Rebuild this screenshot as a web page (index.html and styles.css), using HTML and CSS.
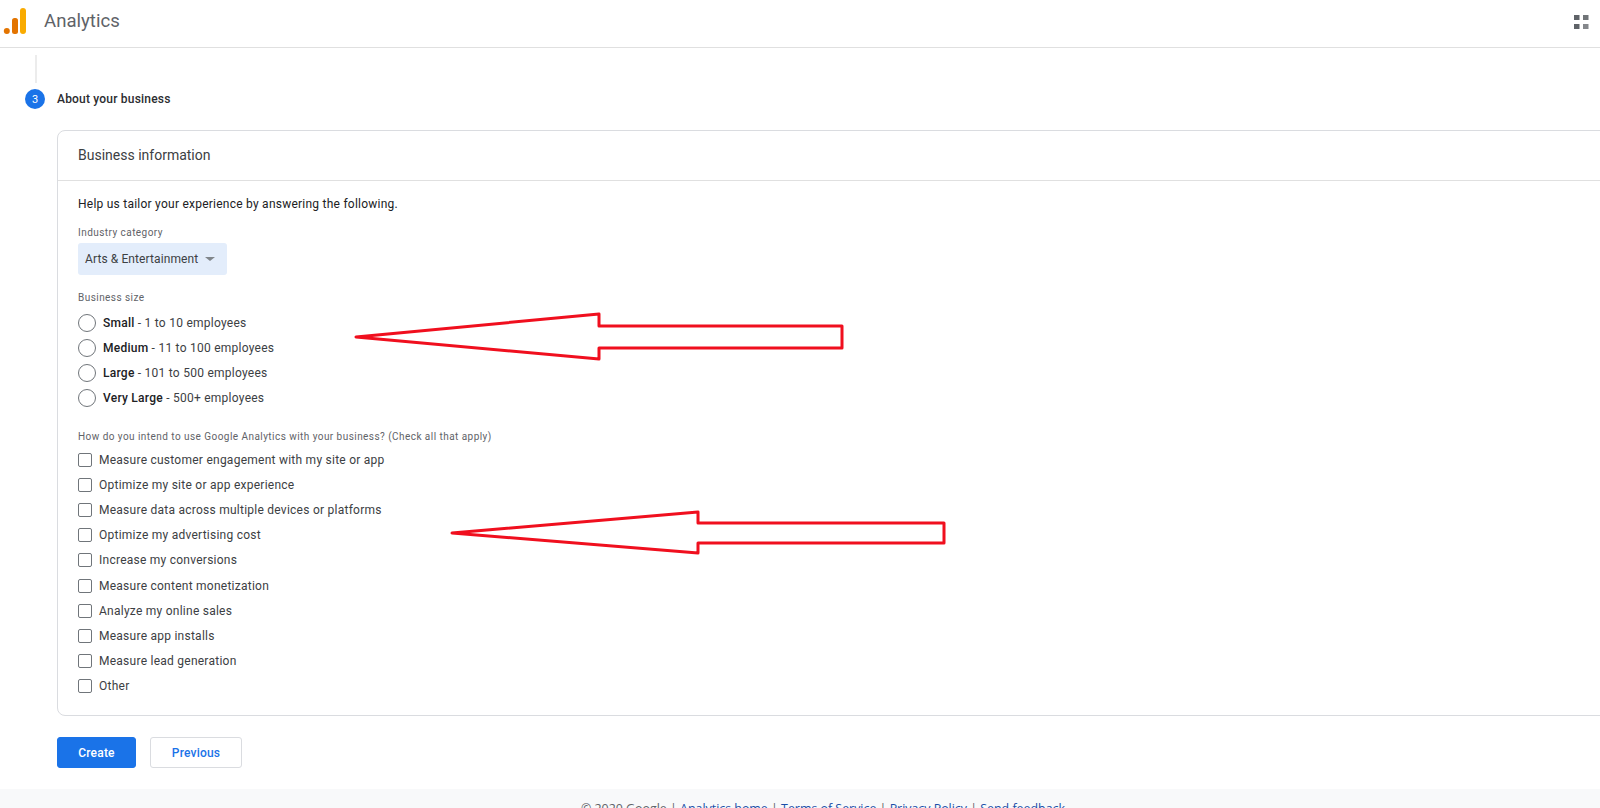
FILE: index.html
```html
<!DOCTYPE html>
<html lang="en">
<head>
<meta charset="utf-8">
<title>Analytics</title>
<link rel="stylesheet" href="styles.css">
</head>
<body>
<div class="page">
  <header class="topbar">
    <svg class="logo" width="24" height="28" viewBox="0 0 24 28">
      <rect x="17" y="1" width="6" height="26" rx="3" fill="#f9ab00"/>
      <rect x="9" y="11" width="6" height="16" rx="2.5" fill="#e37400"/>
      <circle cx="3.8" cy="24" r="3" fill="#e37400"/>
    </svg>
    <span class="brand">Analytics</span>
    <svg class="apps" width="16" height="14" viewBox="0 0 16 14">
      <rect x="0" y="0" width="5.500" height="5" fill="#5f6368"/>
      <rect x="9" y="0" width="5.500" height="5" fill="#707478"/>
      <rect x="0" y="9" width="5.500" height="5" fill="#5f6368"/>
      <rect x="9" y="9" width="5.500" height="5" fill="#85888c"/>
    </svg>
  </header>
  <main class="content">
    <div class="connector"></div>
    <div class="step">
      <span class="step-num">3</span>
      <span class="step-title">About your business</span>
    </div>
    <section class="card">
      <h2 class="card-head">Business information</h2>
      <div class="card-body">
        <p class="intro">Help us tailor your experience by answering the following.</p>
        <div class="label label-industry">Industry category</div>
        <div class="select"><span>Arts &amp; Entertainment</span><i class="caret"></i></div>
        <div class="label label-size">Business size</div>
        <div class="radios">
          <div class="radio-row"><i class="radio"></i><span><b>Small</b> - 1 to 10 employees</span></div>
          <div class="radio-row"><i class="radio"></i><span><b>Medium</b> - 11 to 100 employees</span></div>
          <div class="radio-row"><i class="radio"></i><span><b>Large</b> - 101 to 500 employees</span></div>
          <div class="radio-row"><i class="radio"></i><span><b>Very Large</b> - 500+ employees</span></div>
        </div>
        <div class="label label-use">How do you intend to use Google Analytics with your business? (Check all that apply)</div>
        <div class="checks">
          <div class="check-row"><i class="check"></i><span>Measure customer engagement with my site or app</span></div>
          <div class="check-row"><i class="check"></i><span>Optimize my site or app experience</span></div>
          <div class="check-row"><i class="check"></i><span>Measure data across multiple devices or platforms</span></div>
          <div class="check-row"><i class="check"></i><span>Optimize my advertising cost</span></div>
          <div class="check-row"><i class="check"></i><span>Increase my conversions</span></div>
          <div class="check-row"><i class="check"></i><span>Measure content monetization</span></div>
          <div class="check-row"><i class="check"></i><span>Analyze my online sales</span></div>
          <div class="check-row"><i class="check"></i><span>Measure app installs</span></div>
          <div class="check-row"><i class="check"></i><span>Measure lead generation</span></div>
          <div class="check-row"><i class="check"></i><span>Other</span></div>
        </div>
      </div>
    </section>
    <div class="actions">
      <button class="btn btn-primary">Create</button>
      <button class="btn btn-secondary">Previous</button>
    </div>
  </main>
  <footer class="footer">
    <div class="footer-text">© 2020 Google | <a>Analytics home</a> | <a>Terms of Service</a> | <a>Privacy Policy</a> | <a>Send feedback</a></div>
  </footer>
  <svg class="annotations" width="1600" height="808" viewBox="0 0 1600 808">
    <path d="M356 337 L599 314 V326 H842 V348 H599 V359 Z"/>
    <path d="M452 533 L698 512 V523 H944 V543 H698 V553 Z"/>
  </svg>
</div>
</body>
</html>
```
FILE: styles.css
```css
* { box-sizing: border-box; }
html, body { margin: 0; padding: 0; height: 808px; overflow: hidden; background: #fff; }
body { font-family: Roboto, "Liberation Sans", sans-serif; color: #202124; }
.page { position: relative; width: 1600px; height: 808px; overflow: hidden; display: flex; flex-direction: column; }

.topbar { height: 48px; flex: none; display: flex; align-items: center; padding: 0 10px 6px 3px; border-bottom: 1px solid #e0e0e0; }
.logo { flex: none; }
.brand { margin-left: 17px; font-size: 18.600px; color: #5f6368; line-height: 24px; }
.apps { margin-left: auto; flex: none; margin-top: 2px; }

.content { flex: 1; padding-left: 25px; min-height: 0; }
.connector { width: 2px; height: 28px; margin: 7px 0 0 10px; background: #ececec; }
.step { display: flex; align-items: center; height: 20px; margin-top: 6px; }
.step-num { width: 20px; height: 20px; border-radius: 50%; background: #1a73e8; color: #fff; font-size: 11px; display: flex; align-items: center; justify-content: center; }
.step-title { margin-left: 12px; font-size: 12px; font-weight: 500; letter-spacing: .2px; color: #2b2c2f; }

.card { margin: 21px -40px 0 32px; height: 586px; border: 1px solid #dadce0; border-radius: 8px; }
.card-head { margin: 0; height: 50px; padding-left: 20px; font-size: 14px; font-weight: 400; line-height: 49px; color: #3c4043; letter-spacing: 0; border-bottom: 1px solid #e0e0e0; }
.card-body { padding: 15px 0 0 20px; }
.intro { margin: 0; font-size: 12px; line-height: 16px; letter-spacing: .24px; color: #202124; }
.label { font-size: 10px; line-height: 14px; color: #5f6368; letter-spacing: .45px; }
.label-industry { margin-top: 14px; }
.select { margin-top: 3px; width: 149px; height: 32px; padding: 0 8px 0 7px; display: flex; align-items: center; justify-content: space-between; background: #e3edfb; border-radius: 3px; font-size: 12px; color: #3c4043; letter-spacing: .1px; }
.caret { width: 0; height: 0; margin-right: 4px; border-left: 5px solid transparent; border-right: 5px solid transparent; border-top: 4px solid #80868b; }
.label-size { margin-top: 16px; }

.radios { margin-top: 5px; }
.radio-row { height: 25px; display: flex; align-items: center; font-size: 12px; letter-spacing: .25px; color: #3c4043; }
.radio-row b { font-weight: 500; color: #202124; }
.radio { width: 18px; height: 18px; border: 1.500px solid #70757a; border-radius: 50%; margin-right: 7px; flex: none; }

.label-use { margin-top: 20px; }
.checks { margin-top: 3.500px; }
.check-row { height: 25.100px; display: flex; align-items: center; font-size: 12px; letter-spacing: .25px; color: #3c4043; }
.check { width: 14px; height: 14px; border: 1.500px solid #70757a; border-radius: 2px; margin-right: 7px; flex: none; }

.actions { display: flex; gap: 14px; margin: 21px 0 0 32px; }
.btn { height: 31px; font-family: inherit; font-size: 12px; font-weight: 500; border-radius: 3px; letter-spacing: .2px; padding: 0; }
.btn-primary { width: 79px; background: #1a73e8; border: 1px solid #1a73e8; color: #fff; }
.btn-secondary { width: 92px; background: #fff; border: 1px solid #dadce0; color: #1a73e8; }

.footer { position: absolute; left: 0; right: 0; top: 789px; height: 19px; padding: 12px 0 0 46px; background: #f8f9fa; overflow: hidden; }
.footer-text { text-align: center; font-size: 12.400px; line-height: 16px; color: #5f6368; white-space: nowrap; font-family: "Open Sans", Roboto, sans-serif; }
.footer a { color: #1a4fa8; }

.annotations { position: absolute; left: 0; top: 0; pointer-events: none; }
.annotations path { fill: none; stroke: #f00f1e; stroke-width: 3; stroke-linejoin: round; }
```
